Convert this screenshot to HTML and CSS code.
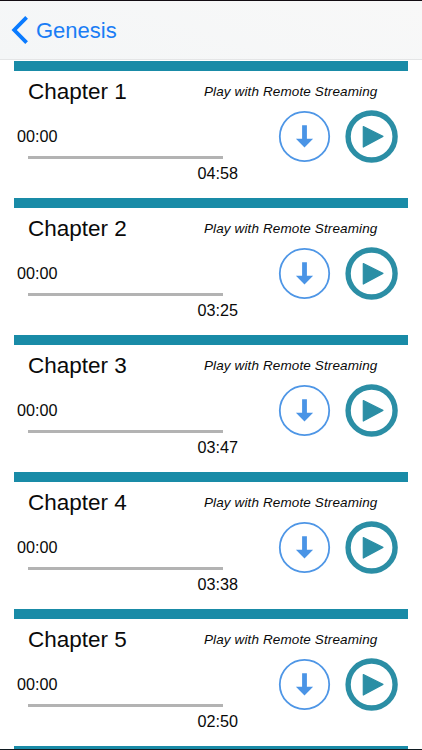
FILE: index.html
```html
<!DOCTYPE html>
<html lang="en">

<head>
    <meta charset="utf-8">
    <meta name="viewport" content="width=device-width, initial-scale=1">
    <title>Genesis</title>
    <link rel="stylesheet" href="styles.css">
</head>

<body>
    <!-- Shared icons -->
    <svg class="icon-defs" aria-hidden="true">
        <symbol id="icon-download" viewBox="0 0 54 54">
            <circle cx="27.5" cy="27.5" r="24.7" fill="none" stroke="#4e96e6" stroke-width="1.8" />
            <path d="M25.1 16.2h4.8v13.6h6.2l-8.6 8.7-8.6-8.7h6.2z" fill="#4a94e6" />
        </symbol>
        <symbol id="icon-play" viewBox="0 0 54 54">
            <circle cx="27.6" cy="27.5" r="23.5" fill="none" stroke="#2b8ea5" stroke-width="5.4" />
            <path d="M19.3 17.5l19.6 9.9-19.6 10.6z" fill="#2b8ea5" stroke="#2b8ea5" stroke-width="1.2" stroke-linejoin="round" />
        </symbol>
    </svg>

    <header class="navbar">
        <a class="back" href="#">
            <svg class="chevron" viewBox="0 0 17 28">
                <path d="M15.6 1.4L3.2 14l12.4 12.6" fill="none" stroke="#0b7bff" stroke-width="3.8" />
            </svg>
            <span>Genesis</span>
        </a>
    </header>

    <main class="chapters">
        <section class="chapter">
            <div class="track">
                <h2 class="title">Chapter 1</h2>
                <span class="elapsed">00:00</span>
                <div class="progress"></div>
                <span class="duration">04:58</span>
            </div>
            <div class="controls">
                <p class="note">Play with Remote Streaming</p>
                <div class="buttons">
                    <button aria-label="Download"><svg><use href="#icon-download" /></svg></button>
                    <button aria-label="Play"><svg><use href="#icon-play" /></svg></button>
                </div>
            </div>
        </section>

        <section class="chapter">
            <div class="track">
                <h2 class="title">Chapter 2</h2>
                <span class="elapsed">00:00</span>
                <div class="progress"></div>
                <span class="duration">03:25</span>
            </div>
            <div class="controls">
                <p class="note">Play with Remote Streaming</p>
                <div class="buttons">
                    <button aria-label="Download"><svg><use href="#icon-download" /></svg></button>
                    <button aria-label="Play"><svg><use href="#icon-play" /></svg></button>
                </div>
            </div>
        </section>

        <section class="chapter">
            <div class="track">
                <h2 class="title">Chapter 3</h2>
                <span class="elapsed">00:00</span>
                <div class="progress"></div>
                <span class="duration">03:47</span>
            </div>
            <div class="controls">
                <p class="note">Play with Remote Streaming</p>
                <div class="buttons">
                    <button aria-label="Download"><svg><use href="#icon-download" /></svg></button>
                    <button aria-label="Play"><svg><use href="#icon-play" /></svg></button>
                </div>
            </div>
        </section>

        <section class="chapter">
            <div class="track">
                <h2 class="title">Chapter 4</h2>
                <span class="elapsed">00:00</span>
                <div class="progress"></div>
                <span class="duration">03:38</span>
            </div>
            <div class="controls">
                <p class="note">Play with Remote Streaming</p>
                <div class="buttons">
                    <button aria-label="Download"><svg><use href="#icon-download" /></svg></button>
                    <button aria-label="Play"><svg><use href="#icon-play" /></svg></button>
                </div>
            </div>
        </section>

        <section class="chapter">
            <div class="track">
                <h2 class="title">Chapter 5</h2>
                <span class="elapsed">00:00</span>
                <div class="progress"></div>
                <span class="duration">02:50</span>
            </div>
            <div class="controls">
                <p class="note">Play with Remote Streaming</p>
                <div class="buttons">
                    <button aria-label="Download"><svg><use href="#icon-download" /></svg></button>
                    <button aria-label="Play"><svg><use href="#icon-play" /></svg></button>
                </div>
            </div>
        </section>

        <div class="next-bar"></div>
    </main>
</body>

</html>
```
FILE: styles.css
```css
* {
    margin: 0;
    padding: 0;
    box-sizing: border-box;
}

body {
    height: 750px;
    display: flex;
    flex-direction: column;
    overflow: hidden;
    background: #fff;
    border-top: 1px solid #120c12;
    border-bottom: 1px solid #101a20;
    color: #0a0a0a;
    font-family: "Liberation Sans", Arial, sans-serif;
}

.icon-defs {
    display: none;
}

/* Navigation bar */
.navbar {
    flex: none;
    height: 59px;
    padding-left: 11px;
    display: flex;
    align-items: center;
    background: linear-gradient(20deg, #f4f6f7, #f8f8f8);
    border-bottom: 1px solid #e4e5e6;
}

.back {
    display: flex;
    align-items: center;
    gap: 8px;
    color: #1a7df5;
    font-size: 22px;
    line-height: 28px;
    text-decoration: none;
}

.back span {
    padding-top: 1px;
}

.chevron {
    width: 17px;
    height: 28px;
}

/* Chapter list */
.chapters {
    flex: none;
    padding: 1px 14px 0;
}

.chapter {
    height: 137px;
    display: flex;
    border-top: 10px solid #198ba7;
}

.track {
    width: 190px;
    display: flex;
    flex-direction: column;
}

.title {
    height: 40px;
    margin-left: 14px;
    font-size: 22.5px;
    font-weight: normal;
    line-height: 42px;
}

.elapsed,
.duration {
    font-size: 16.2px;
    line-height: 20px;
}

.elapsed {
    margin: 15px 0 0 3px;
}

.progress {
    flex: none;
    width: 195px;
    height: 3px;
    margin: 10px 0 0 14px;
    background: #b3b3b3;
}

.duration {
    margin: 4px 0 0 183.5px;
}

.controls {
    flex: 1;
}

.note {
    height: 38px;
    font-size: 13.5px;
    font-style: italic;
    letter-spacing: 0.12px;
    line-height: 41px;
    white-space: nowrap;
}

.buttons {
    display: flex;
    gap: 13px;
    margin-left: 73px;
}

.buttons button {
    width: 54px;
    height: 54px;
    border: none;
    background: none;
}

.buttons svg {
    display: block;
    width: 54px;
    height: 54px;
}

/* Top edge of the chapter below the fold */
.next-bar {
    height: 10px;
    background: #198ba7;
}
```
